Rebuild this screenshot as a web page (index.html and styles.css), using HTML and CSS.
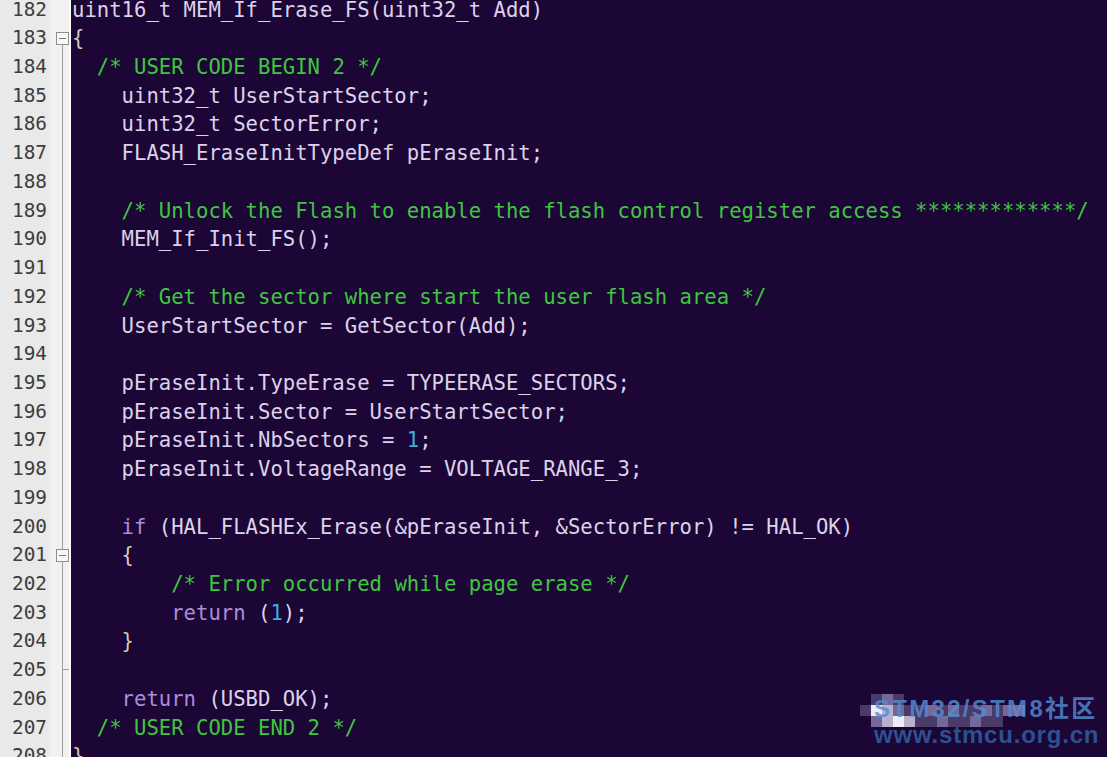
FILE: index.html
```html
<!DOCTYPE html>
<html>
<head>
<meta charset="utf-8">
<link rel="stylesheet" href="styles.css">
</head>
<body>
<div class="editor">
  <div class="lines">
    <div class="row"><div class="num">182</div><div class="fold"></div><div class="code">uint16_t MEM_If_Erase_FS(uint32_t Add)</div></div>
    <div class="row"><div class="num">183</div><div class="fold start"><span class="box"></span></div><div class="code"><span class="br">{</span></div></div>
    <div class="row"><div class="num">184</div><div class="fold line"></div><div class="code">  <span class="cm">/* USER CODE BEGIN 2 */</span></div></div>
    <div class="row"><div class="num">185</div><div class="fold line"></div><div class="code">    uint32_t UserStartSector;</div></div>
    <div class="row"><div class="num">186</div><div class="fold line"></div><div class="code">    uint32_t SectorError;</div></div>
    <div class="row"><div class="num">187</div><div class="fold line"></div><div class="code">    FLASH_EraseInitTypeDef pEraseInit;</div></div>
    <div class="row"><div class="num">188</div><div class="fold line"></div><div class="code"> </div></div>
    <div class="row"><div class="num">189</div><div class="fold line"></div><div class="code">    <span class="cm">/* Unlock the Flash to enable the flash control register access *************/</span></div></div>
    <div class="row"><div class="num">190</div><div class="fold line"></div><div class="code">    MEM_If_Init_FS();</div></div>
    <div class="row"><div class="num">191</div><div class="fold line"></div><div class="code"> </div></div>
    <div class="row"><div class="num">192</div><div class="fold line"></div><div class="code">    <span class="cm">/* Get the sector where start the user flash area */</span></div></div>
    <div class="row"><div class="num">193</div><div class="fold line"></div><div class="code">    UserStartSector = GetSector(Add);</div></div>
    <div class="row"><div class="num">194</div><div class="fold line"></div><div class="code"> </div></div>
    <div class="row"><div class="num">195</div><div class="fold line"></div><div class="code">    pEraseInit.TypeErase = TYPEERASE_SECTORS;</div></div>
    <div class="row"><div class="num">196</div><div class="fold line"></div><div class="code">    pEraseInit.Sector = UserStartSector;</div></div>
    <div class="row"><div class="num">197</div><div class="fold line"></div><div class="code">    pEraseInit.NbSectors = <span class="nm">1</span>;</div></div>
    <div class="row"><div class="num">198</div><div class="fold line"></div><div class="code">    pEraseInit.VoltageRange = VOLTAGE_RANGE_3;</div></div>
    <div class="row"><div class="num">199</div><div class="fold line"></div><div class="code"> </div></div>
    <div class="row"><div class="num">200</div><div class="fold line"></div><div class="code">    <span class="kw">if</span> (HAL_FLASHEx_Erase(&amp;pEraseInit, &amp;SectorError) != HAL_OK)</div></div>
    <div class="row"><div class="num">201</div><div class="fold mid"><span class="box"></span></div><div class="code">    <span class="br">{</span></div></div>
    <div class="row"><div class="num">202</div><div class="fold line"></div><div class="code">        <span class="cm">/* Error occurred while page erase */</span></div></div>
    <div class="row"><div class="num">203</div><div class="fold line"></div><div class="code">        <span class="kw">return</span> (<span class="nm">1</span>);</div></div>
    <div class="row"><div class="num">204</div><div class="fold line"></div><div class="code">    <span class="br">}</span></div></div>
    <div class="row"><div class="num">205</div><div class="fold tick"></div><div class="code"> </div></div>
    <div class="row"><div class="num">206</div><div class="fold line"></div><div class="code">    <span class="kw">return</span> (USBD_OK);</div></div>
    <div class="row"><div class="num">207</div><div class="fold line"></div><div class="code">  <span class="cm">/* USER CODE END 2 */</span></div></div>
    <div class="row"><div class="num">208</div><div class="fold line"></div><div class="code"><span class="br">}</span></div></div>
  </div>

  <div class="watermark">
    <div class="mosaic">
      <i class="c0"></i><i class="c1"></i><i class="c2"></i><i class="c1"></i><i class="c0"></i><i class="c0"></i><i class="c0"></i><i class="c0"></i><i class="c0"></i><i class="c0"></i><i class="c0"></i><i class="c0"></i><i class="c0"></i><i class="c0"></i><i class="c0"></i><i class="c0"></i>
      <i class="c1"></i><i class="c4"></i><i class="c3"></i><i class="c2"></i><i class="c1"></i><i class="c1"></i><i class="c2"></i><i class="c1"></i><i class="c2"></i><i class="c1"></i><i class="c1"></i><i class="c2"></i><i class="c1"></i><i class="c2"></i><i class="c2"></i><i class="c0"></i>
      <i class="c0"></i><i class="c2"></i><i class="c3"></i><i class="c4"></i><i class="c3"></i><i class="c1"></i><i class="c1"></i><i class="c2"></i><i class="c1"></i><i class="c1"></i><i class="c2"></i><i class="c1"></i><i class="c1"></i><i class="c0"></i><i class="c0"></i><i class="c0"></i>
    </div>
    <div class="wm1">STM32/STM8社区</div>
    <div class="wm2">www.stmcu.org.cn</div>
  </div>
</div>
</body>
</html>
```

FILE: styles.css
```css
html, body {
  margin: 0;
  padding: 0;
  background: #1c0636;
}

.editor {
  position: relative;
  width: 1107px;
  height: 757px;
  overflow: hidden;
  background: #1c0636;
}

.lines {
  display: flex;
  flex-direction: column;
  margin-top: -4.4px;
}

.row {
  display: flex;
  height: 28.72px;
  flex: 0 0 28.72px;
}

.num {
  width: 47px;
  padding-right: 3px;
  background: #e9e9e9;
  color: #3d3d3d;
  font-family: "DejaVu Sans Mono", monospace;
  font-size: 19.4px;
  line-height: 28.72px;
  text-align: right;
}

.fold {
  background-color: #f1f1f1;
  border-right: 2px solid #fbfbfb;
  display: flex;
  align-items: center;
  padding-left: 6px;
  box-sizing: border-box;
  width: 21px;
}

.fold.line {
  background-image: linear-gradient(#9c9c9c, #9c9c9c);
  background-repeat: no-repeat;
  background-position: 12px 0;
  background-size: 1px 100%;
}

.fold.start {
  background-image: linear-gradient(#9c9c9c, #9c9c9c);
  background-repeat: no-repeat;
  background-position: 12px 100%;
  background-size: 1px 50%;
}

.fold.mid {
  background-image: linear-gradient(#9c9c9c, #9c9c9c);
  background-repeat: no-repeat;
  background-position: 12px 0;
  background-size: 1px 100%;
}

.fold.tick {
  background-image: linear-gradient(#9c9c9c, #9c9c9c), linear-gradient(#9c9c9c, #9c9c9c);
  background-repeat: no-repeat, no-repeat;
  background-position: 12px 0, 12px 13px;
  background-size: 1px 100%, 8px 1px;
}

.box {
  position: relative;
  width: 13px;
  height: 13px;
  box-sizing: border-box;
  border: 1px solid #8e8e8e;
  background: #f7f7f7;
}

.box::after {
  content: "";
  position: absolute;
  left: 2px;
  right: 2px;
  top: 5px;
  height: 1px;
  background: #777;
}

.code {
  flex: 1;
  padding-left: 1px;
  background: #1c0636;
  color: #dcd2ea;
  font-family: "DejaVu Sans Mono", monospace;
  font-size: 20.6px;
  line-height: 28.72px;
  white-space: pre;
  overflow: hidden;
}

.cm { color: #3fc63f; }
.kw { color: #ab8ddc; }
.nm { color: #3ab0e0; }
.br { color: #d6c6bc; }

.watermark {
  position: absolute;
  left: 860px;
  top: 694px;
  width: 247px;
  height: 60px;
}

.mosaic {
  position: absolute;
  left: 0;
  top: 0;
  display: grid;
  grid-template-columns: repeat(16, 11px);
  grid-auto-rows: 11px;
}

.mosaic i { display: block; }
.mosaic .c0 { background: transparent; }
.mosaic .c1 { background: #4a3a68; }
.mosaic .c2 { background: #75689a; }
.mosaic .c3 { background: #b8b0cc; }
.mosaic .c4 { background: #efedf4; }

.wm1 {
  position: absolute;
  left: 14px;
  top: 0;
  font-family: "Liberation Sans", "Noto Sans CJK SC", sans-serif;
  font-weight: bold;
  font-size: 24px;
  letter-spacing: 2.3px;
  line-height: 30px;
  color: rgba(82, 140, 210, 0.82);
  white-space: nowrap;
}

.wm2 {
  position: absolute;
  left: 14px;
  top: 26px;
  font-family: "Liberation Sans", sans-serif;
  font-weight: bold;
  font-size: 24px;
  letter-spacing: 0.8px;
  line-height: 30px;
  color: rgba(46, 92, 158, 0.9);
  white-space: nowrap;
}
```
